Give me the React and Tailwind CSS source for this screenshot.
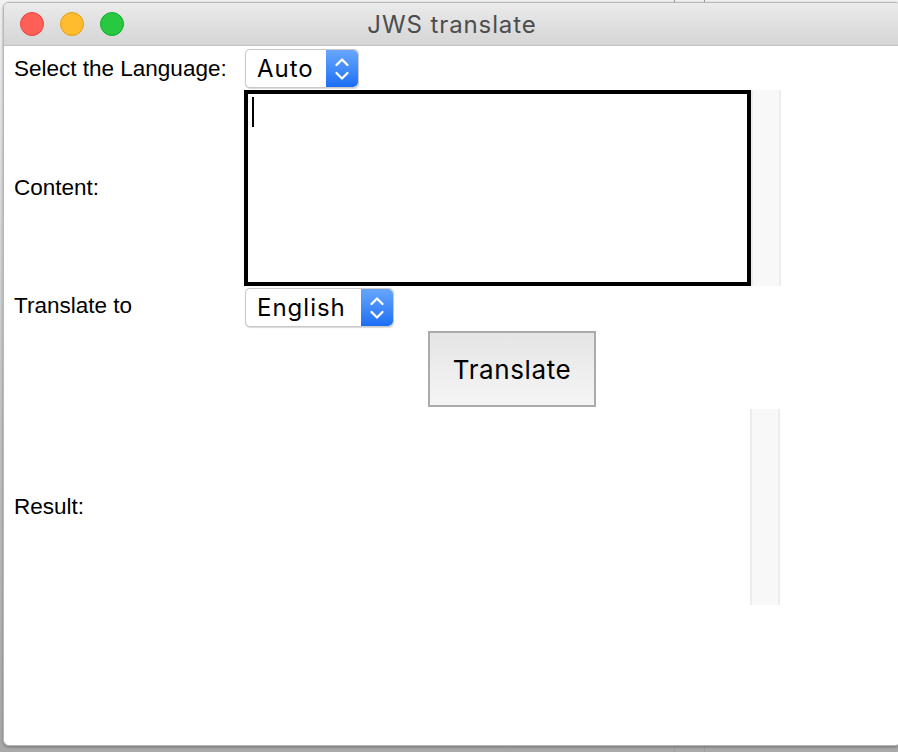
import React from "react";

function Chevrons() {
  return (
    <svg width="16" height="28" viewBox="0 0 16 28" fill="none" stroke="white" strokeWidth="2.3" strokeLinecap="round" strokeLinejoin="round">
      <path d="M2.5 10 L8 4.5 L13.5 10" />
      <path d="M2.5 18 L8 23.5 L13.5 18" />
    </svg>
  );
}

function Select({ label, width }) {
  return (
    <div
      className={`ml-[1px] flex h-[39px] ${width} items-stretch rounded-[5px] border border-[#c9c9c9] bg-white shadow-[0_0.5px_1px_rgba(0,0,0,0.15)]`}
    >
      <div className="flex flex-1 items-center pl-[11px] text-[24px] tracking-[1px] text-black [font-family:Inter,'Open_Sans',sans-serif]">
        {label}
      </div>
      <div className="flex w-[32px] items-center justify-center rounded-r-[5px] bg-gradient-to-b from-[#67a6fb] to-[#1a6ef5]">
        <Chevrons />
      </div>
    </div>
  );
}

function ScrollTrack() {
  return (
    <div className="w-[30px] border-l-2 border-r-2 border-l-[#ececec] border-r-[#ededed] bg-[#f8f8f8]" />
  );
}

export default function App() {
  return (
    <div className="relative h-[752px] w-[898px] overflow-hidden bg-gradient-to-b from-[#f2f2f2] via-[#c8c8c8] to-[#a9a9a9]">
      <div className="absolute left-[674px] top-0 h-[752px] w-px bg-[#9d9d9d]" />
      <div className="absolute left-[704px] top-0 h-[752px] w-px bg-[#9d9d9d]" />
      <div className="relative ml-[3px] mt-[2px] flex h-[744px] w-[898px] flex-col overflow-hidden rounded-[6px] border border-[#b8b8b8] bg-white shadow-[0_1px_3px_rgba(0,0,0,0.35)]">
        {/* Title bar */}
        <div className="relative flex h-[43px] shrink-0 items-center border-b border-[#c3c3c3] bg-gradient-to-b from-[#ebebeb] to-[#d5d5d5]">
          <div className="flex gap-[16px] pl-[16px]">
            <div className="h-[24px] w-[24px] rounded-full border border-[#e2463f] bg-[#fe5f57]" />
            <div className="h-[24px] w-[24px] rounded-full border border-[#e1a116] bg-[#febc2e]" />
            <div className="h-[24px] w-[24px] rounded-full border border-[#12ac28] bg-[#28c840]" />
          </div>
          <div className="absolute inset-0 flex items-center justify-center pt-[1px] text-[24px] tracking-[0.9px] text-[#4d4d4d] [font-family:Inter,sans-serif]">
            JWS translate
          </div>
        </div>

        {/* Content */}
        <div className="flex flex-col pl-[10px] text-[22.5px] text-black [font-family:'Liberation_Sans',Arial,sans-serif]">
          {/* Row 1 */}
          <div className="mt-[3px] flex items-center">
            <div className="w-[230px]">Select the Language:</div>
            <Select label="Auto" width="w-[114px]" />
          </div>

          {/* Content row */}
          <div className="mt-[2px] flex items-center">
            <div className="w-[230px]">Content:</div>
            <div className="flex h-[196px]">
              <div className="relative w-[507px] border-4 border-black bg-white">
                <div className="absolute left-[4px] top-[3px] h-[30px] w-[2px] bg-black" />
              </div>
              <ScrollTrack />
            </div>
          </div>

          {/* Translate to row */}
          <div className="mt-[2px] flex items-start">
            <div className="w-[230px] pt-[1px]">Translate to</div>
            <Select label="English" width="w-[149px]" />
          </div>

          {/* Button row */}
          <div className="mt-[4px] flex">
            <div className="w-[230px]" />
            <div className="flex w-[536px] justify-center">
              <button className="h-[76px] w-[168px] border-2 border-[#ababab] bg-gradient-to-b from-[#e5e5e5] to-[#f5f5f5] text-[26px] tracking-[0.6px] text-black [font-family:Inter,sans-serif]">
                Translate
              </button>
            </div>
          </div>

          {/* Result row */}
          <div className="mt-[2px] flex items-center">
            <div className="w-[230px]">Result:</div>
            <div className="flex h-[196px]">
              <div className="w-[506px] bg-white" />
              <ScrollTrack />
            </div>
          </div>
        </div>
      </div>
    </div>
  );
}
